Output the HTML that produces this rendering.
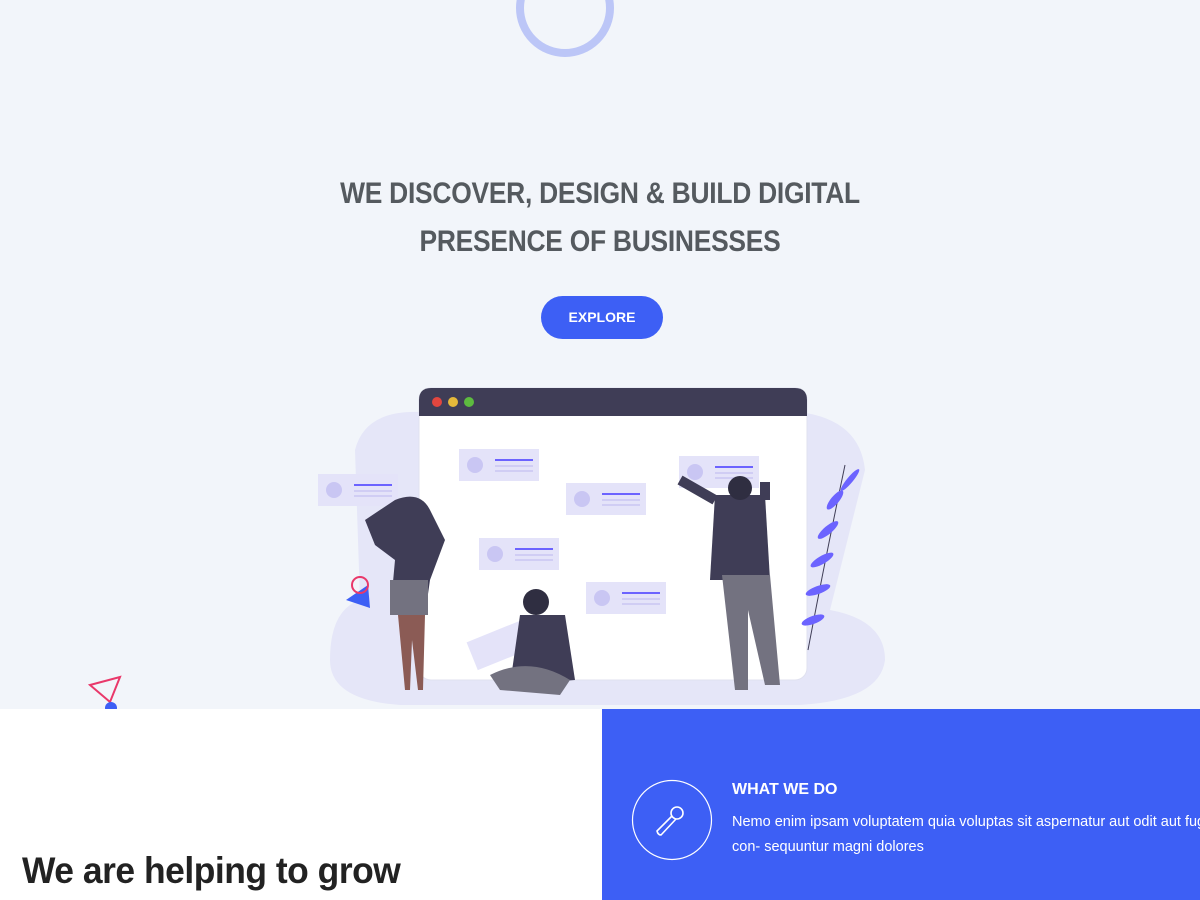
<!DOCTYPE html>
<html><head><meta charset="utf-8"><style>
*{margin:0;padding:0;box-sizing:border-box}
body{width:1200px;height:900px;overflow:hidden;background:#f2f5fa;font-family:"Liberation Sans",sans-serif;position:relative}
.h1{position:absolute;left:0;width:1200px;text-align:center;top:170px;font-size:30px;line-height:48px;font-weight:bold;color:#555a5f;letter-spacing:-0.3px;transform:scaleX(0.88);transform-origin:600px 0}
.btn{position:absolute;left:541px;top:296px;width:122px;height:43px;border-radius:22px;background:#3d5ff5;color:#fff;font-size:14px;font-weight:bold;text-align:center;line-height:43px}
.white{position:absolute;left:0;top:709px;width:602px;height:191px;background:#fff}
.blue{position:absolute;left:602px;top:709px;width:598px;height:191px;background:#3d5ff5;color:#fff}
.grow{position:absolute;left:22px;top:850px;font-size:37px;font-weight:bold;color:#222;letter-spacing:-0.5px;transform:scaleX(0.957);transform-origin:0 0}
</style></head><body>
<svg style="position:absolute;left:0;top:0" width="1200" height="709">
<circle cx="565" cy="8" r="45" fill="none" stroke="#bcc6f7" stroke-width="8"/>
<path d="M330 660 Q330 610 360 600 L355 450 Q365 410 420 412 L800 412 Q860 420 865 470 L830 610 Q885 620 885 660 Q880 700 800 705 L400 705 Q330 700 330 660Z" fill="#e5e6f8"/>
<rect x="419" y="388" width="388" height="292" rx="12" fill="#fff" stroke="#e0e1ef"/>
<path d="M419 416 L419 400 Q419 388 431 388 L795 388 Q807 388 807 400 L807 416Z" fill="#3f3d56"/>
<circle cx="437" cy="402" r="5" fill="#e2463f"/><circle cx="453" cy="402" r="5" fill="#e5b93a"/><circle cx="469" cy="402" r="5" fill="#5dbb3f"/>
<g fill="#e4e3f9">
<rect x="318" y="474" width="80" height="32"/><rect x="459" y="449" width="80" height="32"/><rect x="566" y="483" width="80" height="32"/>
<rect x="479" y="538" width="80" height="32"/><rect x="586" y="582" width="80" height="32"/><rect x="679" y="456" width="80" height="32"/>
<rect x="470" y="630" width="60" height="30" transform="rotate(-22 500 645)"/></g>
<g fill="#c9c6f3"><circle cx="334" cy="490" r="8"/><circle cx="475" cy="465" r="8"/><circle cx="582" cy="499" r="8"/><circle cx="495" cy="554" r="8"/><circle cx="602" cy="598" r="8"/><circle cx="695" cy="472" r="8"/></g>
<g stroke="#6c63ff" stroke-width="2"><path d="M354 485h38M495 460h38M602 494h38M515 549h38M622 593h38M715 467h38"/></g>
<g stroke="#c9c6f3" stroke-width="1.5"><path d="M354 491h38M354 496h38M495 466h38M495 471h38M602 500h38M602 505h38M515 555h38M515 560h38M622 599h38M622 604h38M715 473h38M715 478h38"/></g>
<path d="M845 465 Q825 560 808 650" stroke="#3f3d56" fill="none"/>
<g fill="#6c63ff"><ellipse cx="835" cy="500" rx="12" ry="4" transform="rotate(-50 835 500)"/><ellipse cx="828" cy="530" rx="13" ry="4" transform="rotate(-40 828 530)"/><ellipse cx="822" cy="560" rx="13" ry="4" transform="rotate(-30 822 560)"/><ellipse cx="818" cy="590" rx="13" ry="4" transform="rotate(-20 818 590)"/><ellipse cx="813" cy="620" rx="12" ry="4" transform="rotate(-20 813 620)"/><ellipse cx="850" cy="480" rx="14" ry="3" transform="rotate(-50 850 480)"/></g>
<path d="M395 500 Q420 490 430 510 L445 540 L430 580 L425 615 L390 615 L395 560 L375 545 L365 520Z" fill="#3f3d56"/>
<rect x="390" y="580" width="38" height="35" fill="#737280"/>
<path d="M398 615 L405 690 L410 690 L412 640 L418 690 L423 690 L425 615Z" fill="#8b5b55"/>
<path d="M715 495 L765 495 L770 580 L710 580Z" fill="#3f3d56"/><circle cx="740" cy="488" r="12" fill="#2f2e41"/>
<path d="M722 575 L770 575 L780 685 L765 685 L748 610 L748 690 L735 690Z" fill="#737280"/>
<path d="M715 500 L680 480 M765 500 L765 482" stroke="#3f3d56" stroke-width="10"/>
<path d="M520 615 L565 615 L575 680 L510 685Z" fill="#3f3d56"/><circle cx="536" cy="602" r="13" fill="#2f2e41"/>
<path d="M490 675 Q530 655 570 680 L560 695 L500 690Z" fill="#737280"/>
<path d="M90 685 L120 677 L110 702Z" fill="none" stroke="#e9386a" stroke-width="2"/><circle cx="111" cy="708" r="6" fill="#3d5ff5"/>
<path d="M346 600 L368 585 L370 608Z" fill="#3d5ff5"/><circle cx="360" cy="585" r="8" fill="none" stroke="#e9386a" stroke-width="2"/>
</svg>
<div class="h1">WE DISCOVER, DESIGN &amp; BUILD DIGITAL<br>PRESENCE OF BUSINESSES</div>
<div class="btn">EXPLORE</div>
<div class="white"></div>
<div class="grow">We are helping to grow</div>
<div class="blue">
<svg style="position:absolute;left:29px;top:70px" width="82" height="82"><circle cx="41" cy="41" r="39.5" fill="none" stroke="#fff" stroke-width="1.2"/>
<g fill="none" stroke="#fff" stroke-width="1.6"><circle cx="46" cy="34" r="6"/><path d="M41 37 L26 52 Q27 56 30 56 L45 40"/></g></svg>
<div style="position:absolute;left:130px;top:72px;font-size:16px;font-weight:bold">WHAT WE DO</div>
<div style="position:absolute;left:130px;top:101px;font-size:14.5px;line-height:25px;white-space:nowrap">Nemo enim ipsam voluptatem quia voluptas sit aspernatur aut odit aut fugit<br>con- sequuntur magni dolores</div>
</div>
</body></html>
